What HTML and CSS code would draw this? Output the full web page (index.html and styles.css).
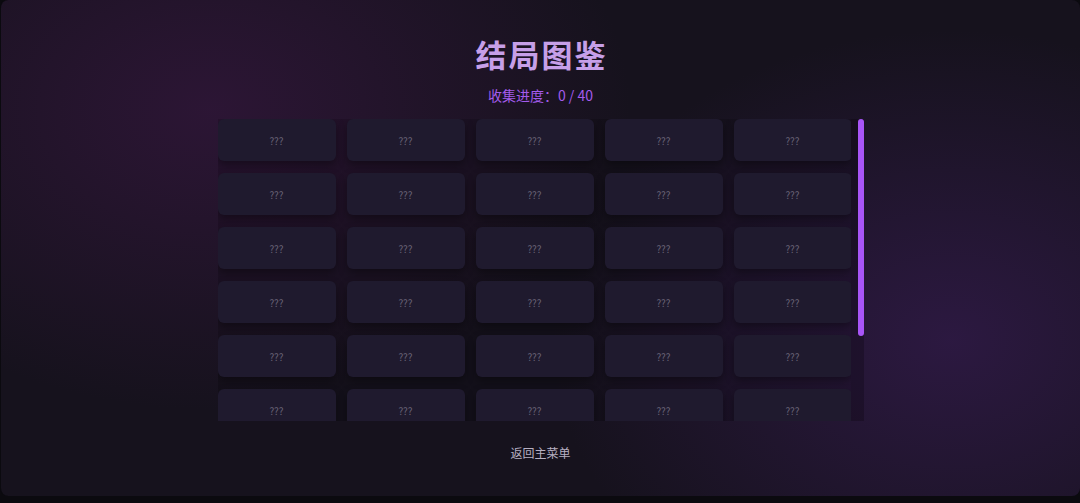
FILE: index.html
```html
<!DOCTYPE html>
<html lang="zh">
<head>
<meta charset="utf-8">
<title>结局图鉴</title>
<link rel="stylesheet" href="styles.css">
</head>
<body>
<div class="screen">
  <h1 class="title">结局图鉴</h1>
  <div class="progress">收集进度：0 / 40</div>
  <div class="scroller">
    <div class="viewport">
      <div class="grid">
        <div class="card">???</div><div class="card">???</div><div class="card">???</div><div class="card">???</div><div class="card">???</div>
        <div class="card">???</div><div class="card">???</div><div class="card">???</div><div class="card">???</div><div class="card">???</div>
        <div class="card">???</div><div class="card">???</div><div class="card">???</div><div class="card">???</div><div class="card">???</div>
        <div class="card">???</div><div class="card">???</div><div class="card">???</div><div class="card">???</div><div class="card">???</div>
        <div class="card">???</div><div class="card">???</div><div class="card">???</div><div class="card">???</div><div class="card">???</div>
        <div class="card">???</div><div class="card">???</div><div class="card">???</div><div class="card">???</div><div class="card">???</div>
        <div class="card">???</div><div class="card">???</div><div class="card">???</div><div class="card">???</div><div class="card">???</div>
        <div class="card">???</div><div class="card">???</div><div class="card">???</div><div class="card">???</div><div class="card">???</div>
      </div>
    </div>
    <div class="track"><div class="thumb"></div></div>
  </div>
  <button class="back">返回主菜单</button>
</div>
</body>
</html>
```
FILE: styles.css
```css
html, body {
  margin: 0;
  padding: 0;
  height: 100%;
  background: #0b0a0f;
  overflow: hidden;
}
body {
  font-family: "Noto Sans CJK SC", "Noto Sans", sans-serif;
}
.screen {
  box-sizing: border-box;
  height: 496px;
  width: 1080px;
  border-radius: 8px;
  border-left: 1px solid #0b0a0f;
  background:
    radial-gradient(ellipse 420px 300px at 210px 110px, rgba(62, 24, 72, 0.55), rgba(62, 24, 72, 0) 100%),
    radial-gradient(ellipse 400px 310px at 950px 340px, rgba(62, 30, 94, 0.55), rgba(62, 30, 94, 0) 100%),
    #16121d;
  display: flex;
  flex-direction: column;
  align-items: center;
  padding-top: 34px;
}
.title {
  margin: 0;
  font-size: 31px;
  line-height: 40px;
  font-weight: 700;
  color: #c69fe8;
  letter-spacing: 2px;
  padding-left: 2px;
}
.progress {
  margin-top: 11px;
  font-size: 14px;
  line-height: 20px;
  color: #a45bec;
}
.scroller {
  margin-top: 14px;
  width: 646px;
  height: 302px;
  display: flex;
  background: rgba(0, 0, 0, 0.1);
}
.viewport {
  flex: 1;
  overflow: hidden;
}
.track {
  width: 13px;
  display: flex;
  justify-content: flex-end;
  background: rgba(0, 0, 0, 0.12);
}
.thumb {
  width: 6px;
  height: 217px;
  border-radius: 3px;
  background: #a855f7;
}
.grid {
  display: grid;
  grid-template-columns: repeat(5, 118px);
  column-gap: 11px;
  row-gap: 12px;
}
.card {
  height: 42px;
  border-radius: 6px;
  background: #1f1a2e;
  box-shadow: 0 4px 8px rgba(0, 0, 0, 0.35);
  display: flex;
  align-items: center;
  justify-content: center;
  font-size: 10px;
  color: #696376;
}
.back {
  margin-top: 22px;
  background: none;
  border: none;
  padding: 0;
  font-family: "Noto Sans CJK SC", "Noto Sans", sans-serif;
  font-size: 12px;
  line-height: 20px;
  color: #b7b0c2;
  cursor: pointer;
}
```
